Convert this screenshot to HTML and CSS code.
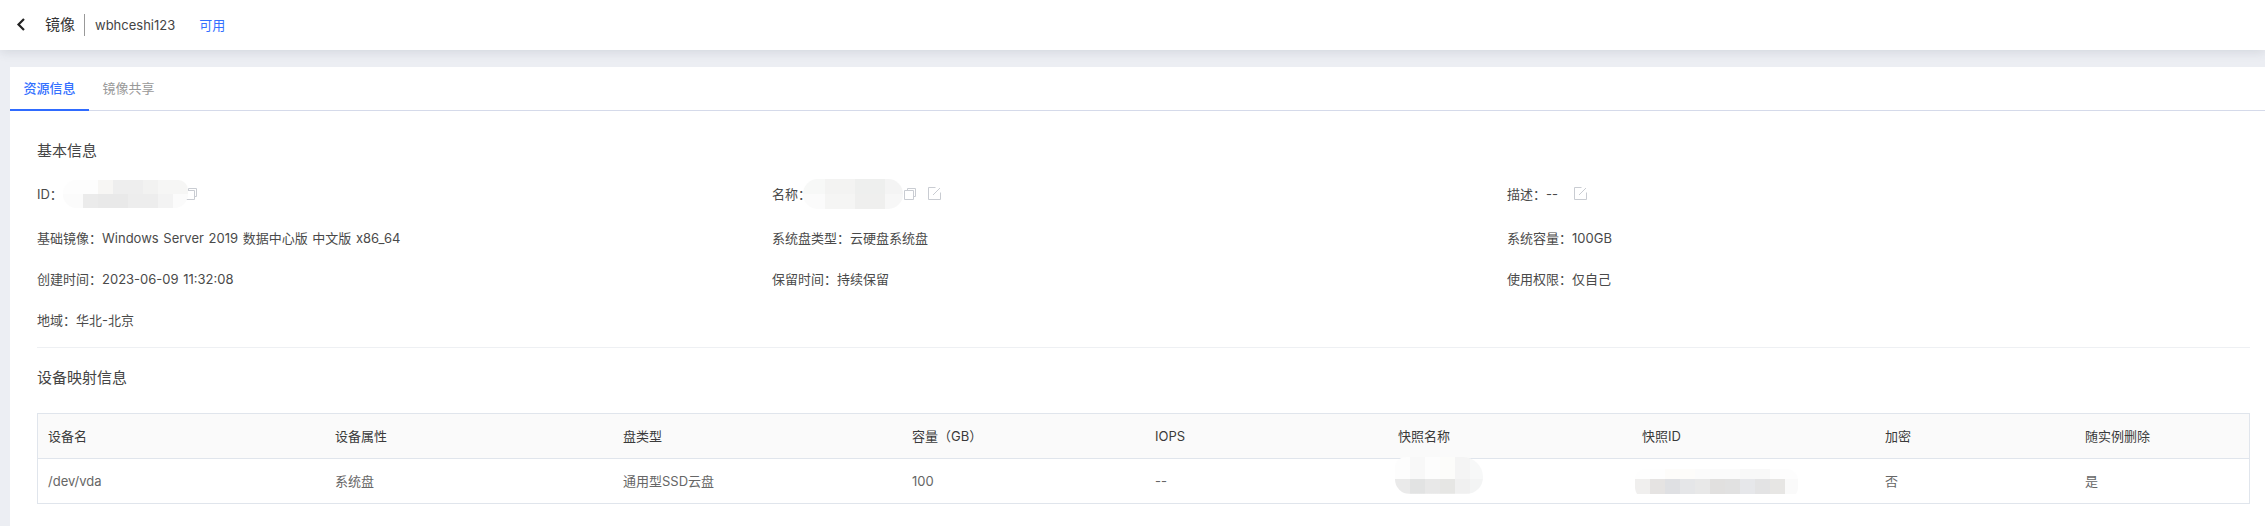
FILE: index.html
```html
<!DOCTYPE html>
<html lang="zh-CN">
<head>
  <meta charset="UTF-8" />
  <meta name="viewport" content="width=device-width, initial-scale=1.0"/>
  <title>镜像详情</title>
  <link rel="stylesheet" href="styles.css">
</head>
<body>

<header class="topbar">
  <svg class="back-icon" width="10" height="13" viewBox="0 0 10 13">
    <path d="M8 1 L2.5 6.5 L8 12" />
  </svg>
  <span class="topbar-title">镜像</span>
  <span class="topbar-name">wbhceshi123</span>
  <span class="topbar-status">可用</span>
</header>

<main class="page">
  <div class="tabs">
    <div class="tab active">资源信息</div>
    <div class="tab">镜像共享</div>
  </div>

  <div class="content">
    <h2 class="section-title">基本信息</h2>

    <div class="info-grid">
      <div class="info-item">
        <span>ID：</span>
        <span class="mosaic mosaic-id"></span>
        <svg class="icon icon-copy icon-behind" width="12" height="12" viewBox="0 0 12 12">
          <path d="M3.5 2.5 V0.5 H11.5 V8.5 H9.5 M0.5 2.5 H9.5 V11.5 H0.5 Z" />
        </svg>
      </div>
      <div class="info-item">
        <span>名称：</span>
        <span class="mosaic mosaic-name"></span>
        <svg class="icon icon-copy" width="12" height="12" viewBox="0 0 12 12">
          <path d="M3.5 2.5 V0.5 H11.5 V8.5 H9.5 M0.5 2.5 H9.5 V11.5 H0.5 Z" />
        </svg>
        <svg class="icon icon-edit name-edit" width="13" height="13" viewBox="0 0 13 13">
          <path d="M7.5 0.5 H0.5 V12.5 H12.5 V5.5 M5 8 L12 1" />
        </svg>
      </div>
      <div class="info-item">
        <span>描述：</span>
        <span>--</span>
        <svg class="icon icon-edit desc-edit" width="13" height="13" viewBox="0 0 13 13">
          <path d="M7.5 0.5 H0.5 V12.5 H12.5 V5.5 M5 8 L12 1" />
        </svg>
      </div>

      <div class="info-item">基础镜像：Windows Server 2019 数据中心版 中文版 x86_64</div>
      <div class="info-item">系统盘类型：云硬盘系统盘</div>
      <div class="info-item">系统容量：100GB</div>

      <div class="info-item">创建时间：2023-06-09 11:32:08</div>
      <div class="info-item">保留时间：持续保留</div>
      <div class="info-item">使用权限：仅自己</div>

      <div class="info-item">地域：华北-北京</div>
    </div>

    <h2 class="section-title mapping-title">设备映射信息</h2>

    <div class="device-table">
      <div class="device-row device-head">
        <div>设备名</div>
        <div>设备属性</div>
        <div>盘类型</div>
        <div>容量（GB）</div>
        <div>IOPS</div>
        <div>快照名称</div>
        <div>快照ID</div>
        <div>加密</div>
        <div>随实例删除</div>
      </div>
      <div class="device-row device-body">
        <div>/dev/vda</div>
        <div>系统盘</div>
        <div>通用型SSD云盘</div>
        <div>100</div>
        <div>--</div>
        <div><span class="mosaic mosaic-snap-name"></span></div>
        <div><span class="mosaic mosaic-snap-id"></span></div>
        <div>否</div>
        <div>是</div>
      </div>
    </div>
  </div>
</main>

</body>
</html>
```

FILE: styles.css
```css
* {
  box-sizing: border-box;
}

html, body {
  height: 100%;
}

body {
  margin: 0;
  overflow: hidden;
  background: #eceef3;
  color: #4a4a4a;
  font-family: Inter, "Noto Sans CJK SC", "Noto Sans", sans-serif;
  font-size: 13px;
  line-height: 20px;
}

.topbar {
  height: 50px;
  padding-left: 16px;
  display: flex;
  align-items: center;
  background: #fff;
  box-shadow: 0 2px 10px rgba(60, 70, 90, 0.14);
  position: relative;
}

.back-icon {
  margin-top: -2px;
  fill: none;
  stroke: #222;
  stroke-width: 2.2;
}

.topbar-title {
  margin-left: 19px;
  padding-right: 9px;
  border-right: 1px solid #999;
  line-height: 22px;
  font-size: 15px;
  color: #333;
}

.topbar-name {
  margin-left: 10px;
  color: #444;
}

.topbar-status {
  margin-left: 24px;
  color: #3370ff;
}

.page {
  margin: 17px 0 0 10px;
  height: 459px;
  background: #fff;
}

.tabs {
  height: 44px;
  display: flex;
  border-bottom: 1px solid #d5daea;
}

.tab {
  width: 79px;
  height: 44px;
  line-height: 42px;
  text-align: center;
  color: #999;
}

.tab.active {
  color: #3370ff;
  font-weight: 500;
  border-bottom: 2px solid #2f6bff;
}

.content {
  padding: 30px 15px 0 27px;
}

.section-title {
  margin: 0;
  font-size: 15px;
  font-weight: 400;
  color: #444;
}

.info-grid {
  margin-top: 11px;
  padding-bottom: 7px;
  display: grid;
  grid-template-columns: 735px 735px 1fr;
  grid-template-rows: 45px repeat(3, 41px);
  border-bottom: 1px solid #eef0f3;
  word-spacing: 1px;
}

.info-item {
  display: flex;
  align-items: center;
  white-space: nowrap;
}

.info-item:nth-child(-n+3) {
  padding-bottom: 2px;
}

.icon {
  flex: none;
  fill: none;
  stroke: #c9ccd2;
  stroke-width: 1;
}

.icon-copy {
  margin-left: 1px;
}

.icon-behind {
  margin-left: -3px;
}

.name-edit {
  margin-left: 12px;
}

.desc-edit {
  margin-left: 16px;
}

.mapping-title {
  margin-top: 20px;
}

.device-table {
  margin-top: 25px;
  border: 1px solid #e0e5ec;
}

.device-row {
  height: 44px;
  display: grid;
  grid-template-columns: 287px 288px 289px 243px 243px 244px 243px 200px 1fr;
  align-items: center;
}

.device-row > div {
  padding-left: 10px;
  white-space: nowrap;
}

.device-head {
  height: 45px;
  background: #fafafa;
  border-bottom: 1px solid #e0e5ec;
  color: #3a3a3a;
}

.device-body {
  color: #666;
}

/* masked values in the source screenshot */
.mosaic {
  display: block;
  flex: none;
  position: relative;
  z-index: 1;
}

.mosaic-id {
  width: 125px;
  height: 28px;
  border-radius: 14px 10px 14px 14px;
  background:
    linear-gradient(90deg, #fdfdfd 0 35px, #f7f6f4 35px 50px, #eeeeee 50px 80px, #f2f2f1 80px 95px, #f6f6f5 95px 125px) top / 100% 50% no-repeat,
    linear-gradient(90deg, #fbfbfb 0 20px, #ebebeb 20px 35px, #e9e9e9 35px 65px, #ededed 65px 95px, #f3f3f3 95px 110px, #fbfbfb 110px) bottom / 100% 50% no-repeat;
}

.mosaic-name {
  width: 100px;
  height: 30px;
  margin-left: -8px;
  border-radius: 15px;
  background:
    linear-gradient(90deg, #f7f8f7 0 22px, #f3f3f2 22px 52px, #eeefee 52px 82px, #f4f4f4 82px) top / 100% 50% no-repeat,
    linear-gradient(90deg, #fbfbfb 0 22px, #f5f5f4 22px 52px, #efefee 52px 82px, #f7f7f7 82px) bottom / 100% 50% no-repeat;
}

.mosaic-snap-name {
  width: 88px;
  height: 37px;
  margin: -11px 0 0 -3px;
  border-radius: 12px 22px 18px 16px;
  background:
    linear-gradient(90deg, #fdfdfd 0 15px, #f8f8f8 15px 30px, #fdfdfd 30px 45px, #fcfcfa 45px 60px, #f4f4f4 60px 75px, #f7f8f8 75px) top / 100% 60% no-repeat,
    linear-gradient(90deg, #eaeaea 0 15px, #e2e3e3 15px 30px, #e8e8e8 30px 45px, #e6e6e4 45px 60px, #f0f0f0 60px 75px, #f3f4f4 75px) bottom / 100% 40% no-repeat;
}

.mosaic-snap-id {
  width: 163px;
  height: 30px;
  margin: 5px 0 0 -7px;
  border-radius: 12px;
  background:
    linear-gradient(90deg, #fefefe 0 30px, #fdfcfa 30px 60px, #fbfbfb 60px 105px, #f8f8f8 105px 135px, #fdfdfd 135px) top / 100% 34% no-repeat,
    linear-gradient(90deg, #f0efee 0 15px, #e5e3e2 15px 30px, #dfe0e3 30px 45px, #e5e6e8 45px 60px, #e8e8e8 60px 75px, #e1e0df 75px 90px, #e1e1e1 90px 105px, #e6e7ea 105px 120px, #e3e3e4 120px 135px, #e7e6e4 135px 150px, #fafafa 150px) 0 10px / 100% 15px no-repeat;
}
```
